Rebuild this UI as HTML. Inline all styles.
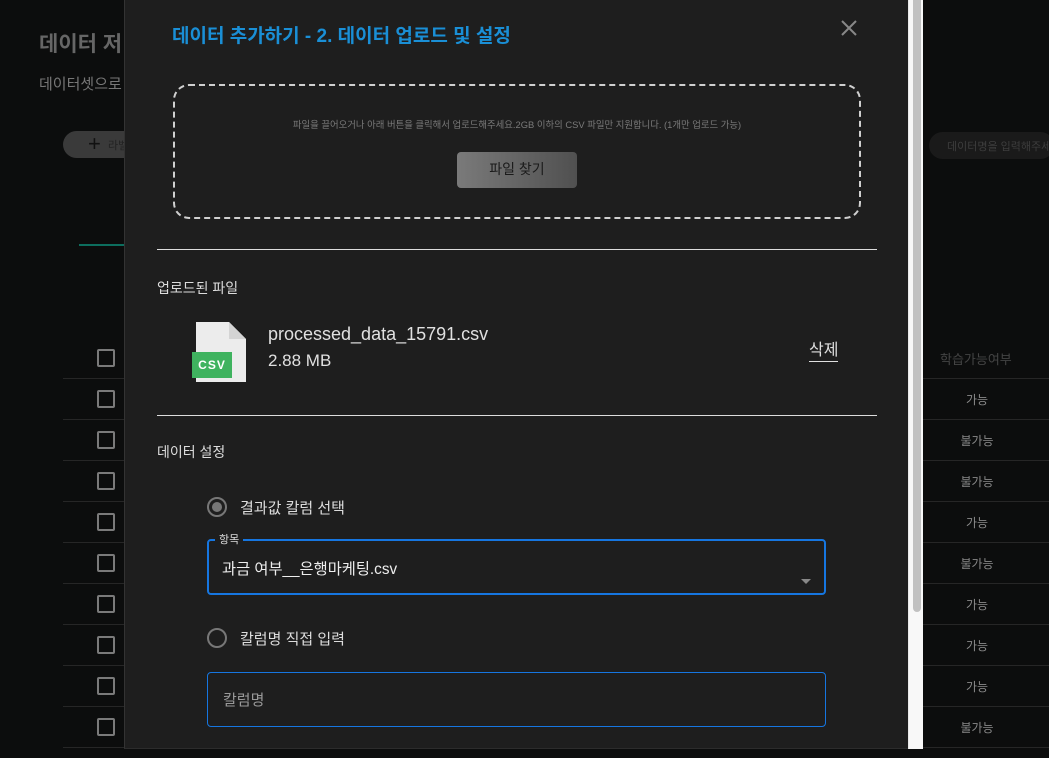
<!DOCTYPE html>
<html><head><meta charset="utf-8"><style>
*{margin:0;padding:0;box-sizing:border-box}
body{width:1049px;height:758px;overflow:hidden;background:#0c0d0d;font-family:"Liberation Sans","Noto Sans CJK KR",sans-serif;position:relative}
.a{position:absolute}
.cb{position:absolute;left:97px;width:18px;height:18px;border:2px solid #7a7a7a;border-radius:2px}
.rl{position:absolute;left:63px;width:62px;height:1px;background:#262626}
.rr{position:absolute;left:922px;width:127px;height:1px;background:#262626}
.rt{position:absolute;left:922px;width:110px;text-align:center;color:#8a8a8a;font-size:12px}
</style></head><body>
<div class="a" style="left:39px;top:28px;font-size:21px;font-weight:bold;color:#666">데이터 저</div>
<div class="a" style="left:39px;top:73px;font-size:15px;color:#777">데이터셋으로</div>
<div class="a" style="left:63px;top:131px;width:80px;height:27px;border-radius:14px;background:#3a3a3a"></div>
<div class="a" style="left:88px;top:131px;font-size:22px;color:#111">+</div>
<div class="a" style="left:108px;top:137px;font-size:11px;color:#222">라벨</div>
<div class="a" style="left:79px;top:244px;width:46px;height:2px;background:#0d6e5e"></div>
<div class="a" style="left:929px;top:132px;width:125px;height:27px;border-radius:14px;background:#1a1a1a"></div>
<div class="a" style="left:947px;top:138px;font-size:11px;color:#3d3d3d;white-space:nowrap">데이터명을 입력해주세</div>
<div class="a" style="left:940px;top:349px;font-size:13px;color:#444">학습가능여부</div>
<div class="cb" style="top:349px"></div><div class="cb" style="top:390px"></div><div class="cb" style="top:431px"></div><div class="cb" style="top:472px"></div><div class="cb" style="top:513px"></div><div class="cb" style="top:554px"></div><div class="cb" style="top:595px"></div><div class="cb" style="top:636px"></div><div class="cb" style="top:677px"></div><div class="cb" style="top:718px"></div>
<div class="rl" style="top:378px"></div><div class="rl" style="top:419px"></div><div class="rl" style="top:460px"></div><div class="rl" style="top:501px"></div><div class="rl" style="top:542px"></div><div class="rl" style="top:583px"></div><div class="rl" style="top:624px"></div><div class="rl" style="top:665px"></div><div class="rl" style="top:706px"></div><div class="rl" style="top:747px"></div>
<div class="rr" style="top:378px"></div><div class="rr" style="top:419px"></div><div class="rr" style="top:460px"></div><div class="rr" style="top:501px"></div><div class="rr" style="top:542px"></div><div class="rr" style="top:583px"></div><div class="rr" style="top:624px"></div><div class="rr" style="top:665px"></div><div class="rr" style="top:706px"></div><div class="rr" style="top:747px"></div>
<div class="rt" style="top:391px">가능</div><div class="rt" style="top:432px">불가능</div><div class="rt" style="top:473px">불가능</div><div class="rt" style="top:514px">가능</div><div class="rt" style="top:555px">불가능</div><div class="rt" style="top:596px">가능</div><div class="rt" style="top:637px">가능</div><div class="rt" style="top:678px">가능</div><div class="rt" style="top:719px">불가능</div>

<div class="a" style="left:124px;top:0;width:798px;height:749px;background:#1e1e1e;border-left:1px solid #333;border-bottom:1px solid #2c2c2c">
 <div class="a" style="left:47px;top:21px;font-size:19px;font-weight:bold;color:#1a8fd6;white-space:nowrap">데이터 추가하기 - 2. 데이터 업로드 및 설정</div>
 <svg class="a" style="left:715px;top:19px" width="18" height="18" viewBox="0 0 18 18"><path d="M2 2L16 16M16 2L2 16" stroke="#888" stroke-width="2"/></svg>
 <div class="a" style="left:48px;top:84px;width:688px;height:135px;border:2px dashed #d0d0d0;border-radius:16px"></div>
 <div class="a" style="left:48px;top:117px;width:688px;text-align:center;font-size:9.4px;color:#7a7a7a;white-space:nowrap">파일을 끌어오거나 아래 버튼을 클릭해서 업로드해주세요.2GB 이하의 CSV 파일만 지원합니다. (1개만 업로드 가능)</div>
 <div class="a" style="left:332px;top:152px;width:120px;height:36px;border-radius:4px;background:linear-gradient(90deg,#7a7a7a,#505050);color:#1a1a1a;font-size:14px;text-align:center;line-height:35px">파일 찾기</div>
 <div class="a" style="left:32px;top:249px;width:720px;height:1px;background:#ddd"></div>
 <div class="a" style="left:32px;top:278px;font-size:14px;color:#ddd">업로드된 파일</div>
 <svg class="a" style="left:66px;top:321px" width="62" height="62" viewBox="0 0 62 62"><path d="M5 1H38L55 18V61H5Z" fill="#ececec"/><path d="M38 1V18H55Z" fill="#d4d4d4"/><rect x="1" y="31" width="40" height="26" fill="#3fb35f"/><text x="21" y="48" text-anchor="middle" font-family="Liberation Sans" font-weight="bold" font-size="12" fill="#fff" letter-spacing="1">CSV</text></svg>
 <div class="a" style="left:143px;top:324px;font-size:18px;color:#e0e0e0">processed_data_15791.csv</div>
 <div class="a" style="left:143px;top:351px;font-size:17px;color:#e0e0e0">2.88 MB</div>
 <div class="a" style="left:684px;top:341px;font-size:16px;color:#e0e0e0;border-bottom:1px solid #e0e0e0;line-height:20px">삭제</div>
 <div class="a" style="left:32px;top:415px;width:720px;height:1px;background:#ddd"></div>
 <div class="a" style="left:32px;top:442px;font-size:14px;color:#ddd">데이터 설정</div>
 <div class="a" style="left:82px;top:497px;width:20px;height:20px;border:2px solid #777;border-radius:50%"></div>
 <div class="a" style="left:87px;top:502px;width:10px;height:10px;background:#777;border-radius:50%"></div>
 <div class="a" style="left:115px;top:497px;font-size:15px;color:#ddd">결과값 칼럼 선택</div>
 <div class="a" style="left:82px;top:539px;width:619px;height:56px;border:2px solid #1676e0;border-radius:4px"></div>
 <div class="a" style="left:90px;top:531px;padding:0 4px;background:#1e1e1e;font-size:11px;color:#ddd">항목</div>
 <div class="a" style="left:97px;top:557px;font-size:15.3px;color:#eee">과금 여부__은행마케팅.csv</div>
 <div class="a" style="left:676px;top:579px;width:0;height:0;border-left:5px solid transparent;border-right:5px solid transparent;border-top:5px solid #888"></div>
 <div class="a" style="left:82px;top:628px;width:20px;height:20px;border:2px solid #777;border-radius:50%"></div>
 <div class="a" style="left:115px;top:628px;font-size:15px;color:#ddd">칼럼명 직접 입력</div>
 <div class="a" style="left:82px;top:672px;width:619px;height:55px;border:1px solid #1676e0;border-radius:4px"></div>
 <div class="a" style="left:98px;top:689px;font-size:15px;color:#999">칼럼명</div>
 <div class="a" style="left:783px;top:0;width:15px;height:749px;background:#f8f8f8;border-left:1px solid #e8e8e8"></div>
 <div class="a" style="left:788px;top:0;width:8px;height:612px;background:#c1c1c1;border-radius:0 0 4px 4px"></div>
</div>
</body></html>
